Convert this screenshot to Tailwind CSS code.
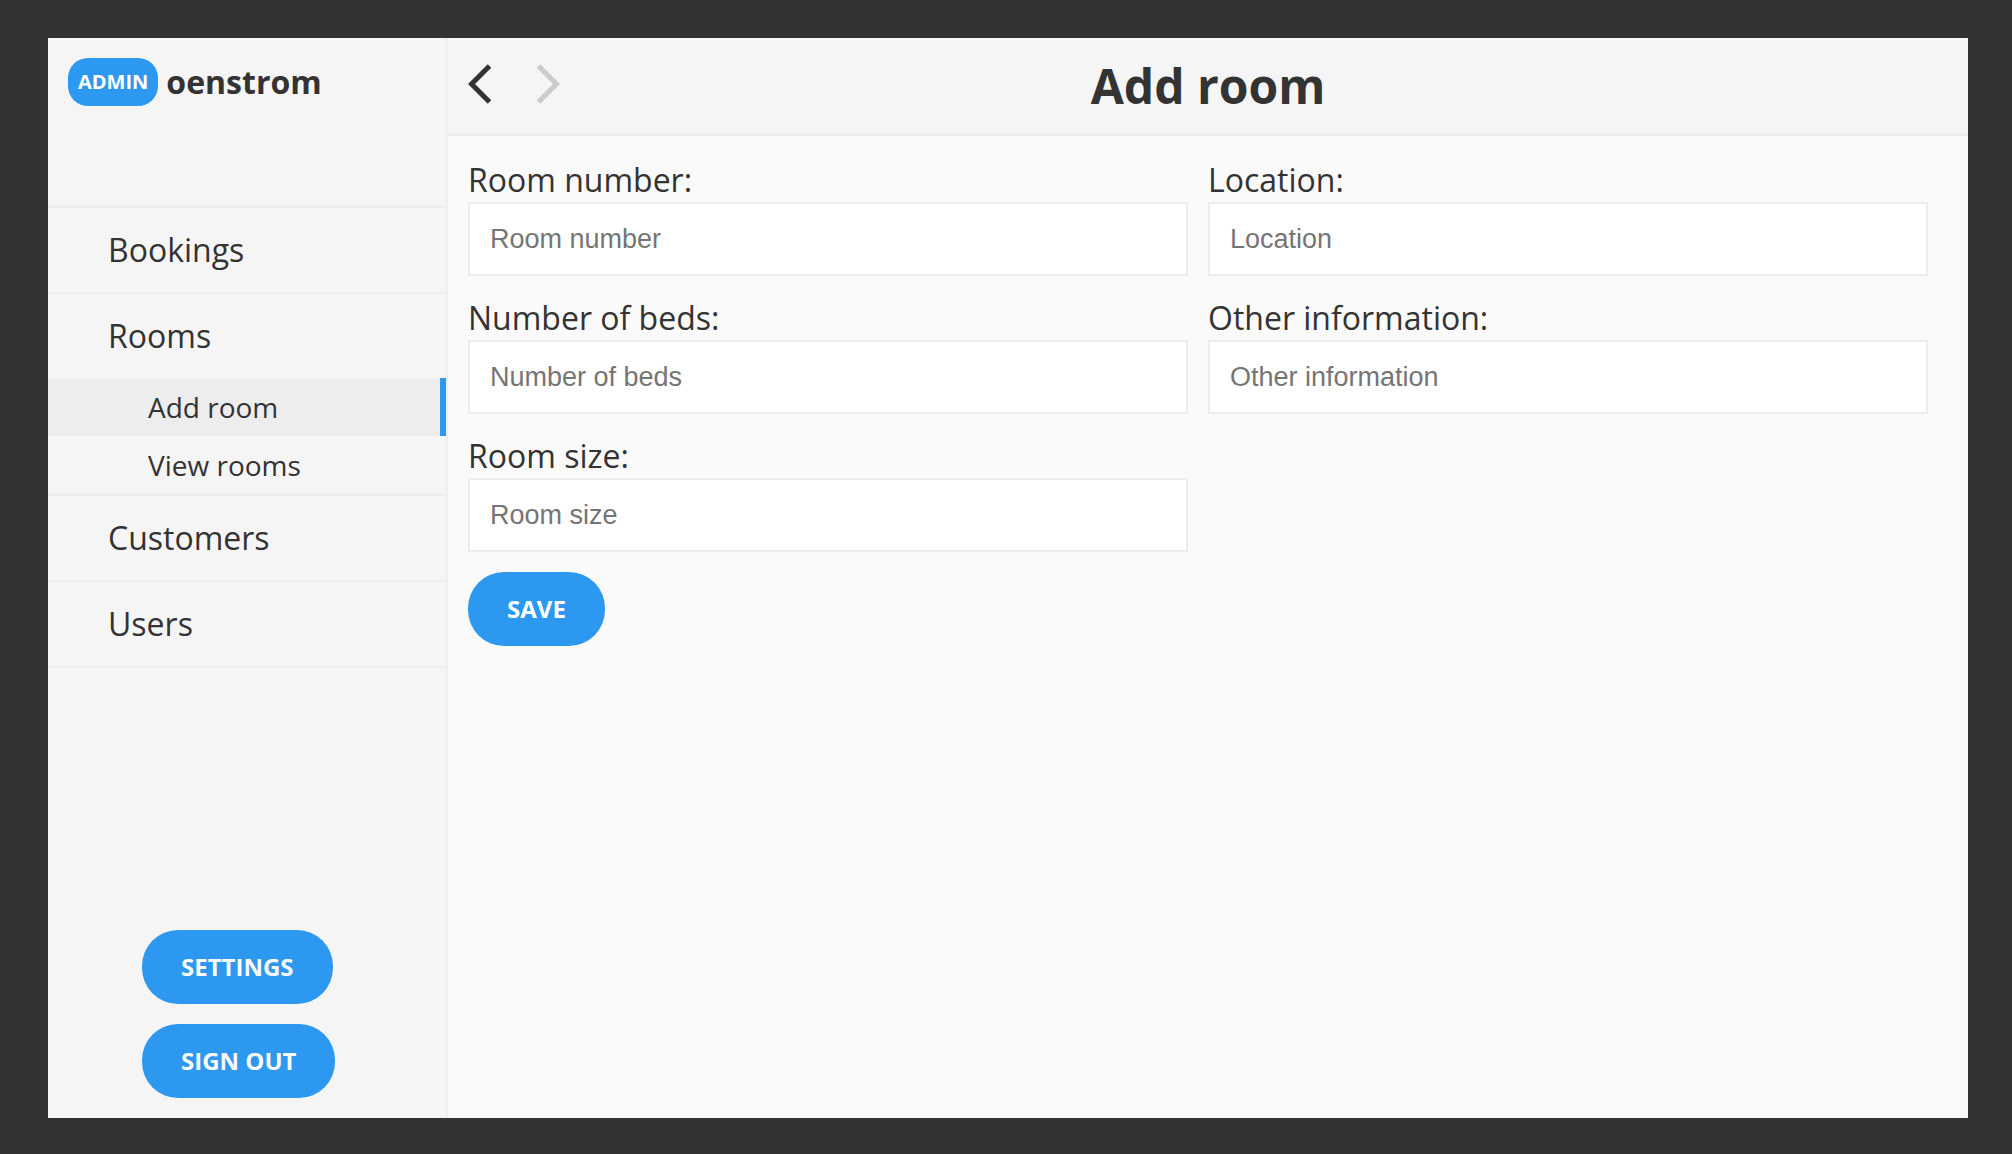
<!DOCTYPE html>
<html lang="en">
<head>
<meta charset="utf-8">
<meta name="viewport" content="width=device-width, initial-scale=1">
<title>Add room</title>
<script src="https://cdn.jsdelivr.net/npm/@tailwindcss/browser@4"></script>
</head>
<body class="flex min-h-screen bg-[#333333] pt-[38px] pr-11 pb-9 pl-12 font-['Open_Sans',sans-serif] text-[32px] leading-[44px] text-[#333333]">
  <div class="flex grow bg-[#fafafa]">
    <aside class="flex w-[400px] shrink-0 flex-col border-r-2 border-[#ededed] bg-[#f5f5f5]">
      <div class="flex h-[168px] items-start p-5">
        <div class="flex items-center gap-2">
          <span class="rounded-[20px] bg-[#2d98f0] p-[10px] text-[20px] leading-[28px] font-bold text-white">ADMIN</span>
          <span class="font-bold">oenstrom</span>
        </div>
      </div>
      <nav aria-label="Main">
        <ul class="border-t-2 border-[#ededed]">
          <li class="border-b-2 border-[#ededed]"><a href="#bookings" class="block py-5 pl-[60px]">Bookings</a></li>
          <li class="border-b-2 border-[#ededed]">
            <a href="#rooms" class="block py-5 pl-[60px]">Rooms</a>
            <ul class="text-[28px] leading-[38px]">
              <li><a href="#add-room" aria-current="page" class="block border-r-6 border-[#2d98f0] bg-[#ededed] py-[10px] pl-[100px]">Add room</a></li>
              <li><a href="#view-rooms" class="block py-[10px] pl-[100px]">View rooms</a></li>
            </ul>
          </li>
          <li class="border-b-2 border-[#ededed]"><a href="#customers" class="block py-5 pl-[60px]">Customers</a></li>
          <li class="border-b-2 border-[#ededed]"><a href="#users" class="block py-5 pl-[60px]">Users</a></li>
        </ul>
      </nav>
      <div class="mt-auto flex flex-col items-start gap-5 pb-5 pl-[94px]">
        <button type="button" class="rounded-[36px] bg-[#2d98f0] px-[39px] py-5 text-[24px] leading-[34px] font-bold text-[#fafafa]">SETTINGS</button>
        <button type="button" class="rounded-[36px] bg-[#2d98f0] px-[39px] py-5 text-[24px] leading-[34px] font-bold text-[#fafafa]">SIGN OUT</button>
      </div>
    </aside>

    <main class="min-w-0 grow">
      <header class="grid h-[98px] grid-cols-[1fr_auto_1fr] items-center border-b-2 border-[#ededed] bg-[#f5f5f5] px-5">
        <div class="flex gap-11 pb-1">
          <button type="button" aria-label="Back">
            <svg class="block h-10 w-6" viewBox="0 0 24 40" fill="none" stroke="#333333" stroke-width="5"><path d="M21.5 2 3.5 20l18 18"/></svg>
          </button>
          <button type="button" aria-label="Forward" disabled>
            <svg class="block h-10 w-6" viewBox="0 0 24 40" fill="none" stroke="#cccccc" stroke-width="5"><path d="M2.5 2l18 18-18 18"/></svg>
          </button>
        </div>
        <h1 class="text-[48px] leading-[66px] font-bold">Add room</h1>
      </header>

      <form class="px-5 pt-[22px]">
        <div class="grid grid-cols-2 items-start gap-x-5 pr-5">
          <div class="flex flex-col gap-5">
            <div>
              <label for="room-number" class="block">Room number:</label>
              <input id="room-number" type="text" placeholder="Room number" class="block h-[74px] w-full border-2 border-[#ededed] bg-white px-5 font-['Liberation_Sans',sans-serif] text-[27px] leading-[30px] placeholder:text-[#757575]">
            </div>
            <div>
              <label for="beds" class="block">Number of beds:</label>
              <input id="beds" type="text" placeholder="Number of beds" class="block h-[74px] w-full border-2 border-[#ededed] bg-white px-5 font-['Liberation_Sans',sans-serif] text-[27px] leading-[30px] placeholder:text-[#757575]">
            </div>
            <div>
              <label for="size" class="block">Room size:</label>
              <input id="size" type="text" placeholder="Room size" class="block h-[74px] w-full border-2 border-[#ededed] bg-white px-5 font-['Liberation_Sans',sans-serif] text-[27px] leading-[30px] placeholder:text-[#757575]">
            </div>
          </div>
          <div class="flex flex-col gap-5">
            <div>
              <label for="location" class="block">Location:</label>
              <input id="location" type="text" placeholder="Location" class="block h-[74px] w-full border-2 border-[#ededed] bg-white px-5 font-['Liberation_Sans',sans-serif] text-[27px] leading-[30px] placeholder:text-[#757575]">
            </div>
            <div>
              <label for="other" class="block">Other information:</label>
              <input id="other" type="text" placeholder="Other information" class="block h-[74px] w-full border-2 border-[#ededed] bg-white px-5 font-['Liberation_Sans',sans-serif] text-[27px] leading-[30px] placeholder:text-[#757575]">
            </div>
          </div>
        </div>
        <button type="submit" class="mt-5 block rounded-[36px] bg-[#2d98f0] px-[39px] py-5 text-[24px] leading-[34px] font-bold text-white">SAVE</button>
      </form>
    </main>
  </div>
</body>
</html>
